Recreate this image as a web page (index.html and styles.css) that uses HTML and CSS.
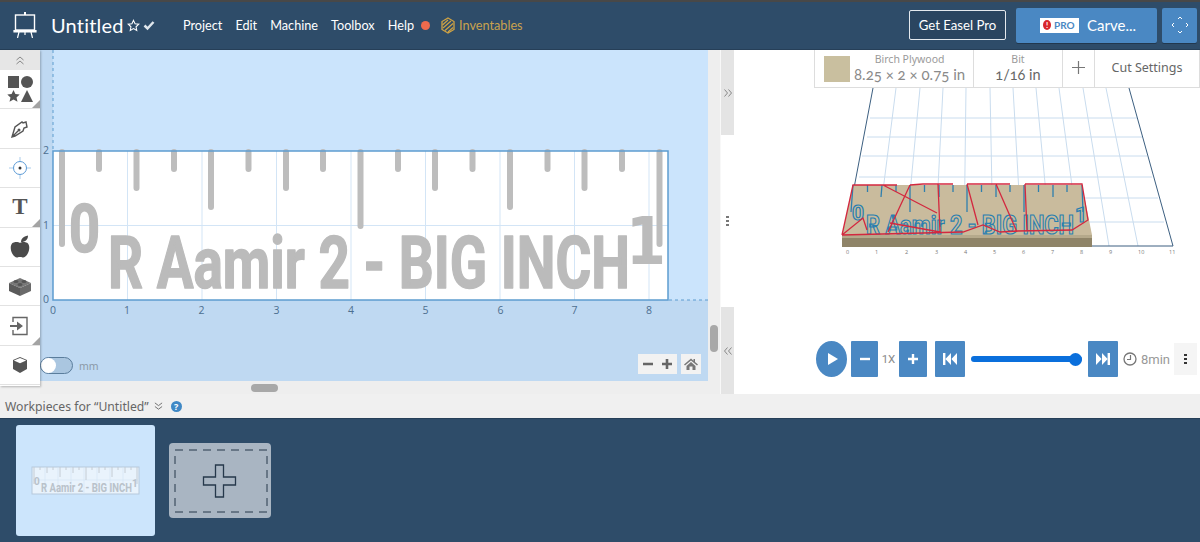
FILE: index.html
```html
<!DOCTYPE html>
<html lang="en">
<head>
    <meta charset="UTF-8">
    <title>Easel</title>
    <link rel="stylesheet" href="styles.css">
</head>
<body>
    <!-- Top bar -->
    <header class="topbar">
        <svg class="logo" width="24" height="26" viewBox="0 0 24 26">
            <path d="M11 0h2v3h-2z" fill="#fff"/>
            <rect x="2.500" y="3" width="19" height="15" fill="none" stroke="#fff" stroke-width="1.400"/>
            <path d="M1 18.500h22v1.500H1zM6 20l-1.500 6M18 20l1.500 6M12 20v3" stroke="#fff" stroke-width="1.200" fill="#fff"/>
        </svg>
        <div class="doc-title">Untitled</div>
        <svg class="doc-star" width="13" height="13" viewBox="0 0 24 24"><path d="M12 2.500l2.900 6.300 6.800.8-5 4.700 1.300 6.800-6-3.400-6 3.400 1.300-6.800-5-4.700 6.800-.8z" fill="none" stroke="#fff" stroke-width="2"/></svg>
        <svg class="doc-check" width="12" height="12" viewBox="0 0 24 24"><path d="M3 13l6 6L21 6" fill="none" stroke="#dfe6ec" stroke-width="5"/></svg>
        <nav class="menu">
            <a href="#">Project</a>
            <a href="#">Edit</a>
            <a href="#">Machine</a>
            <a href="#">Toolbox</a>
            <a href="#">Help</a>
        </nav>
        <span class="status-dot"></span>
        <svg class="inv-logo" width="14" height="17" viewBox="0 0 14 17">
            <path d="M7 1l6 3.500v8L7 16l-6-3.500v-8z" fill="none" stroke="#d0a344" stroke-width="1.300"/>
            <path d="M1.500 8L7 3M2 11l8-7M4 13.500l8-7M7 15l5-4.500" stroke="#d0a344" stroke-width="1.200"/>
        </svg>
        <a class="inv-link" href="#">Inventables</a>
        <button class="btn-outline">Get Easel Pro</button>
        <button class="btn-carve">
            <span class="pro-badge"><span class="pro-dot">!</span>PRO</span>
            Carve...
        </button>
        <button class="btn-expand">
            <svg width="20" height="20" viewBox="0 0 20 20"><path d="M8 4l2-2 2 2M8 16l2 2 2-2M4 8l-2 2 2 2M16 8l2 2-2 2" fill="none" stroke="#fff" stroke-width="1"/></svg>
        </button>
    </header>

    <main class="workspace">
        <!-- Tools -->
        <aside class="tools">
            <div class="tool-collapse">
                <svg width="10" height="10" viewBox="0 0 10 10"><path d="M1.500 5l3.500-3 3.500 3M1.500 9l3.500-3 3.500 3" fill="none" stroke="#888" stroke-width="1"/></svg>
            </div>
            <div class="tool tool-more">
                <svg width="26" height="30" viewBox="0 0 26 30" fill="#555">
                    <rect x="1" y="2" width="11" height="12"/><circle cx="20" cy="8" r="6"/>
                    <path d="M6.500 16l1.900 4.100 4.300.5-3.200 2.900 1 4.300-4-2.300-4 2.300 1-4.300-3.200-2.900 4.300-.5z"/>
                    <path d="M20 16l6 12H14z"/>
                </svg>
            </div>
            <div class="tool">
                <svg width="20" height="20" viewBox="0 0 20 20"><path d="M2 18l3-10 7-5 1 1 3-1 1 5-3 1-1 3-8 5zM2 18l6-6" fill="none" stroke="#555" stroke-width="1.400"/><circle cx="9" cy="11" r="1.500" fill="#555"/></svg>
            </div>
            <div class="tool">
                <svg width="24" height="24" viewBox="0 0 24 24"><circle cx="12" cy="12" r="6.500" fill="none" stroke="#5a9ad6" stroke-width="1"/><circle cx="12" cy="12" r="1.500" fill="#333"/><path d="M12 1v4M12 19v4M1 12h4M19 12h4" stroke="#a9cbea" stroke-width="1"/></svg>
            </div>
            <div class="tool tool-more"><span class="tool-t">T</span></div>
            <div class="tool">
                <svg width="22" height="24" viewBox="0 0 22 24" fill="#4a4a4a">
                    <path d="M11 8c-2-1.500-6-1.500-8 .5-2 2.500-1.500 7 .5 10.500 1.500 2.500 3.500 4 5 3.500 1.500-.6 3.500-.6 5 0 1.500.5 3.500-1 5-3.500 2-3.500 2.500-8 .5-10.500-2-2-6-2-8-.5z"/>
                    <path d="M12 7c0-3 2-5.500 7-6.500 0 4-2.500 6.500-7 6.500z"/>
                </svg>
            </div>
            <div class="tool">
                <svg width="24" height="22" viewBox="0 0 24 22">
                    <path d="M1 8l11-5 11 5-11 5z" fill="#777"/>
                    <path d="M1 8v8l11 5v-8z" fill="#5a5a5a"/>
                    <path d="M23 8v8l-11 5v-8z" fill="#6a6a6a"/>
                    <ellipse cx="8" cy="6.500" rx="2.500" ry="1.500" fill="#555"/><ellipse cx="16" cy="6.500" rx="2.500" ry="1.500" fill="#555"/><ellipse cx="12" cy="9.500" rx="2.500" ry="1.500" fill="#555"/>
                </svg>
            </div>
            <div class="tool tool-more">
                <svg width="20" height="20" viewBox="0 0 20 20"><path d="M3 6V1.500h14v17H3V14" fill="none" stroke="#666" stroke-width="1.400"/><path d="M0 9h7V5.500l6 4.500-6 4.500V11H0z" fill="#666"/></svg>
            </div>
            <div class="tool">
                <svg width="18" height="18" viewBox="0 0 18 18"><path d="M9 1l7 3v9l-7 4-7-4V4z" fill="#555"/><path d="M2.800 4.500L9 2l6.200 2.500L9 7.200z" fill="#fff"/></svg>
            </div>
        </aside>

        <!-- Design canvas -->
        <section class="canvas-col">
            <div class="canvas-row">
                <div class="canvas">
                    <svg class="canvas-svg" width="668" height="331" viewBox="40 50 668 331">
                        <rect x="40" y="50" width="668" height="331" fill="#cbe4fc"/>
                        <rect x="40" y="50" width="13" height="331" fill="#bfd9f2"/>
                        <rect x="40" y="300" width="668" height="81" fill="#bfd9f2"/>
                        <rect x="53" y="151" width="615" height="149" fill="#fff"/>
                        <path class="grid" d="M127.500 151v149M202 151v149M276.500 151v149M351 151v149M425.500 151v149M500 151v149M574.500 151v149M649 151v149M53 225.500h615"/>
                        <path class="dash" d="M53 50v100M669 300h39"/>
                        <path class="ticks" d="M62 152v92M99 152v17M136.500 152v36M174 152v17M211 152v55M248.500 152v17M286 152v36M323 152v17M360.500 152v74M398 152v17M435 152v36M472.500 152v17M510 152v55M547.500 152v17M584.500 152v36M622 152v17M659.500 152v92"/>
                        <text class="big-text" x="108" y="288" font-size="73" textLength="522" lengthAdjust="spacingAndGlyphs">R Aamir 2 - BIG INCH</text>
                        <text class="big-text" x="69" y="252" font-size="67" textLength="31" lengthAdjust="spacingAndGlyphs">0</text>
                        <text class="big-text big-one" x="626" y="264" font-size="66" textLength="40" lengthAdjust="spacingAndGlyphs">1</text>
                        <rect x="53" y="151" width="615" height="149" fill="none" stroke="#5d9ccf" stroke-width="1.500"/>
                        <g class="axis">
                            <text x="53" y="314">0</text><text x="127" y="314">1</text><text x="201.500" y="314">2</text><text x="276.500" y="314">3</text><text x="351" y="314">4</text><text x="425.500" y="314">5</text><text x="500.500" y="314">6</text><text x="574.500" y="314">7</text><text x="649" y="314">8</text>
                            <text x="46" y="154">2</text><text x="46" y="229">1</text><text x="46" y="303">0</text>
                        </g>
                    </svg>
                    <div class="unit-toggle">
                        <span class="toggle-track"><span class="toggle-knob"></span></span>
                        <span class="toggle-label">mm</span>
                    </div>
                    <div class="zoom-ctrl">
                        <div class="zoom-box">
                            <svg width="39" height="20" viewBox="0 0 39 20"><path d="M5 10h10M24 10h10M29 5v10" stroke="#666" stroke-width="2.600"/></svg>
                        </div>
                        <div class="home-box">
                            <svg width="14" height="14" viewBox="0 0 14 14"><path d="M7 1.500L0 7.500l1 1L7 3.500l6 5 1-1-3-2.500V2H9.500v1.800z M2.500 9L7 5l4.500 4v4H8.500V9.500h-3V13h-3z" fill="#777"/></svg>
                        </div>
                    </div>
                </div>
                <div class="vscroll"><span class="vthumb"></span></div>
            </div>
            <div class="hscroll"><span class="hthumb"></span></div>
        </section>

        <!-- Splitter -->
        <div class="splitter">
            <div class="split-end">
                <svg width="10" height="10" viewBox="0 0 10 10"><path d="M1.500 1.500l3 3.500-3 3.500M5.500 1.500l3 3.500-3 3.500" fill="none" stroke="#888" stroke-width="1"/></svg>
            </div>
            <div class="split-mid"><span class="vdots"><i></i><i></i><i></i></span></div>
            <div class="split-end">
                <svg width="10" height="10" viewBox="0 0 10 10"><path d="M4.500 1.500L1.500 5l3 3.500M8.500 1.500L5.500 5l3 3.500" fill="none" stroke="#888" stroke-width="1"/></svg>
            </div>
        </div>

        <!-- Simulation -->
        <section class="preview-col">
            <div class="stock-bar">
                <div class="stock-cell stock-material">
                    <span class="swatch"></span>
                    <div class="stock-text">
                        <div class="stock-label">Birch Plywood</div>
                        <div class="stock-value">8.25 × 2 × 0.75 in</div>
                    </div>
                </div>
                <div class="stock-cell stock-bit">
                    <div class="stock-text">
                        <div class="stock-label">Bit</div>
                        <div class="stock-value bit-value">1/16 in</div>
                    </div>
                </div>
                <div class="stock-cell stock-add">
                    <svg width="13" height="13" viewBox="0 0 13 13"><path d="M6.500 0v13M0 6.500h13" stroke="#777" stroke-width="1.200"/></svg>
                </div>
                <div class="stock-cell stock-settings">Cut Settings</div>
            </div>

            <svg class="preview" width="466" height="253" viewBox="734 88 466 253">
                <path class="p-grid" d="M896 88L876 246M920 88L905 246M943 88L935 246M966 88L964 246M990 88L993 246M1013 88L1022 246M1036 88L1051 246M1059 88L1080 246M1083 88L1109 246M1106 88L1138 246M870 118H1137M867 137H1142M862 156H1147M859 177H1152M856 198H1158M852 222H1164"/>
                <path d="M873 88L843 246H1173L1129 88" fill="none" stroke="#3c5f80" stroke-width="1"/>
                <polygon points="853,185 1082,185 1092,235 842,235" fill="#c9bb9d"/>
                <polygon points="842,235 1092,235 1092,247 842,247" fill="#8f8468"/>
                <polygon points="842,235 1092,235 1092,238 842,238" fill="#b5a98b"/>
                <path class="p-ticks" d="M853 185L851 212M867.500 185v7M882 185l-1 12M896 185v7M910 185v27M924.500 185v7M939 185v12M953 185v7M967 185v27M981.500 185v7M996 185v12M1010 185v7M1024 185v27M1038.500 185v7M1053 185v12M1067 185v7M1082 185l1 27"/>
                <text class="p-text" x="866" y="234" font-size="25" textLength="208" lengthAdjust="spacingAndGlyphs">R Aamir 2 - BIG INCH</text>
                <text class="p-text" x="852" y="220" font-size="20" textLength="12" lengthAdjust="spacingAndGlyphs">0</text>
                <text class="p-text" x="1075" y="222" font-size="20" textLength="12" lengthAdjust="spacingAndGlyphs">1</text>
                <path class="p-red" d="M842 235L853 185H897M883 185L937 213M910 185L888 232M910 185L923 184H953M938 184L940 232M967 184H1010M967 184L978 225M996 184L1017 232M1025 184H1082L1088 220L1072 230L1017 231M1025 184L1027 231M842 235L863 218L867 230M842 235L963 232L983 225L1000 232L1017 231M890 223L940 232"/>
                <g class="p-axis">
                    <text x="846" y="254">0</text><text x="875" y="254">1</text><text x="905" y="254">2</text><text x="935" y="254">3</text><text x="964" y="254">4</text><text x="993" y="254">5</text><text x="1022" y="254">6</text><text x="1051" y="254">7</text><text x="1080" y="254">8</text><text x="1109" y="254">9</text><text x="1138" y="254">10</text><text x="1169" y="254">11</text>
                </g>
            </svg>

            <div class="controls">
                <button class="btn-play"><svg width="12" height="14" viewBox="0 0 12 14"><path d="M1 1l10 6-10 6z" fill="#fff"/></svg></button>
                <button class="btn-sim btn-minus"><svg width="12" height="12" viewBox="0 0 12 12"><path d="M1 6h10" stroke="#fff" stroke-width="2.400"/></svg></button>
                <span class="speed">1X</span>
                <button class="btn-sim btn-plus"><svg width="12" height="12" viewBox="0 0 12 12"><path d="M1 6h10M6 1v10" stroke="#fff" stroke-width="2.400"/></svg></button>
                <button class="btn-sim btn-wide"><svg width="14" height="12" viewBox="0 0 14 12"><path d="M0 0h2.400v12H0zM8 0v12L2.400 6zM14 0v12L8.400 6z" fill="#fff"/></svg></button>
                <div class="slider"><span class="slider-thumb"></span></div>
                <button class="btn-sim btn-wide"><svg width="14" height="12" viewBox="0 0 14 12"><path d="M14 0h-2.400v12H14zM6 0v12l5.600-6zM0 0v12l5.600-6z" fill="#fff"/></svg></button>
                <svg class="clock" width="14" height="14" viewBox="0 0 14 14"><circle cx="7" cy="7" r="6" fill="none" stroke="#777" stroke-width="1.300"/><path d="M7.500 3v4.500H4" fill="none" stroke="#777" stroke-width="1.200"/></svg>
                <span class="duration">8min</span>
                <button class="btn-menu"><span class="vdots dark"><i></i><i></i><i></i></span></button>
            </div>
        </section>
    </main>

    <!-- Workpieces -->
    <div class="wp-header">
        <span>Workpieces for “Untitled”</span>
        <svg width="9" height="9" viewBox="0 0 10 10"><path d="M1 1l4 3 4-3M1 5l4 3 4-3" fill="none" stroke="#666" stroke-width="1"/></svg>
        <span class="help-icon">?</span>
    </div>
    <footer class="wp-bar">
        <div class="wp-card">
            <svg width="110" height="32" viewBox="0 0 110 32">
                <rect x="1" y="2" width="107" height="27" fill="#e9f3fc" stroke="#b6c9dc"/>
                <path d="M14 2v27M27 2v27M40 2v27M53 2v27M66 2v27M79 2v27M92 2v27M1 15h107" stroke="#d3e4f4" stroke-width=".6"/>
                <path d="M3 2v17M9 2v3M16 2v6M22 2v3M29 2v10M35 2v3M42 2v6M48 2v3M55 2v13M61 2v3M68 2v6M74 2v3M81 2v10M87 2v3M94 2v6M100 2v3M106 2v17" stroke="#c4ccd4" stroke-width="1"/>
                <text x="10" y="27" font-size="13" textLength="91" lengthAdjust="spacingAndGlyphs" class="thumb-text">R Aamir 2 - BIG INCH</text>
                <text x="3" y="20" font-size="10" class="thumb-text">0</text>
                <text x="101" y="22" font-size="10" class="thumb-text">1</text>
            </svg>
        </div>
        <div class="wp-add">
            <svg width="102" height="75" viewBox="0 0 102 75">
                <rect x="6" y="7" width="92" height="62" fill="none" stroke="#26384b" stroke-width="1" stroke-dasharray="8 6"/>
                <path d="M46.500 22h8v12h12v8h-12v12h-8V42h-12v-8h12z" fill="none" stroke="#26384b" stroke-width="1.300"/>
            </svg>
        </div>
    </footer>
</body>
</html>
```

FILE: styles.css
```css
/* Global Styles */
* {
    box-sizing: border-box;
}

html,
body {
    margin: 0;
    height: 542px;
    overflow: hidden;
}

body {
    font-family: "Noto Sans", Arial, sans-serif;
    background-color: #f0f0f0;
    color: #666;
}

button {
    font-family: inherit;
    border: none;
    padding: 0;
    cursor: pointer;
}

/* Top bar */
.topbar {
    display: flex;
    align-items: center;
    height: 50px;
    padding-bottom: 2px;
    background-color: #2e4c69;
    border-top: 2px solid #484848;
    color: white;
    box-shadow: inset 0 -1px 0 #263f58;
    font-family: "Lato", sans-serif;
}

.logo {
    margin-left: 13px;
}

.doc-title {
    margin-left: 14px;
    width: 76px;
    font-size: 20px;
    letter-spacing: 0.200px;
}

.doc-check {
    margin-left: 3px;
}

.menu {
    display: flex;
    gap: 13px;
    margin-left: 28px;
}

.menu a {
    color: white;
    text-decoration: none;
    font-size: 12.700px;
}

.status-dot {
    width: 9px;
    height: 9px;
    margin-left: 7px;
    border-radius: 50%;
    background-color: #ee6a4d;
}

.inv-logo {
    margin-left: 11px;
}

.inv-link {
    margin-left: 4px;
    color: #c9a24e;
    font-size: 12.700px;
    text-decoration: none;
}

.btn-outline {
    margin-left: auto;
    width: 97px;
    height: 30px;
    background-color: #2a4560;
    border: 1px solid #e4e9ee;
    border-radius: 2px;
    color: white;
    font-size: 13.200px;
}

.btn-carve {
    display: flex;
    align-items: center;
    gap: 8px;
    margin-left: 10px;
    width: 141px;
    height: 35px;
    padding-left: 24px;
    background-color: #4a88c3;
    border-radius: 2px;
    color: white;
    font-size: 15px;
    box-shadow: 0 1px 0 #22384e;
}

.pro-badge {
    display: flex;
    align-items: center;
    gap: 3px;
    width: 39px;
    height: 15px;
    padding-left: 3px;
    background-color: white;
    color: #4a88c3;
    font-size: 10px;
    font-weight: bold;
}

.pro-dot {
    width: 8px;
    height: 10px;
    border-radius: 50%;
    background-color: #d8262c;
    color: white;
    font-size: 8px;
    line-height: 10px;
    text-align: center;
}

.btn-expand {
    display: flex;
    align-items: center;
    justify-content: center;
    width: 35px;
    height: 35px;
    margin: 0 3px 0 5px;
    background-color: #4a88c3;
    border-radius: 2px;
    box-shadow: 0 1px 0 #22384e;
}

/* Workspace */
.workspace {
    display: flex;
    height: 344px;
}

.tools {
    position: relative;
    z-index: 2;
    flex: none;
    width: 40px;
    height: 336px;
    background-color: white;
    box-shadow: 1px 1px 2px rgba(0, 0, 0, 0.25);
}

.tool-collapse {
    display: flex;
    align-items: center;
    justify-content: center;
    height: 20px;
    background-color: #e6e6e6;
}

.tool {
    position: relative;
    display: flex;
    align-items: center;
    justify-content: center;
    height: 39.400px;
    border-bottom: 1px solid #e2e2e2;
}

.tool-more::after {
    content: "";
    position: absolute;
    right: 0;
    bottom: 0;
    border-style: solid;
    border-width: 0 0 8px 8px;
    border-color: transparent transparent #a3a3a3 transparent;
}

.tool-t {
    font-family: "Liberation Serif", serif;
    font-size: 23px;
    font-weight: bold;
    color: #555;
}

.canvas-col {
    flex: none;
    width: 680px;
    height: 344px;
}

.canvas-row {
    display: flex;
    height: 331px;
}

.canvas {
    position: relative;
    width: 668px;
    height: 331px;
}

.canvas-svg {
    display: block;
}

.grid {
    fill: none;
    stroke: #d3e5f6;
    stroke-width: 1;
}

.dash {
    fill: none;
    stroke: #5d9ccf;
    stroke-width: 1;
    stroke-dasharray: 3 3;
}

.ticks {
    fill: none;
    stroke: #bdbdbd;
    stroke-width: 6;
    stroke-linecap: round;
}

.big-text {
    font-family: "Roboto", sans-serif;
    font-weight: bold;
    fill: #bbbbbb;
    stroke: #bbbbbb;
    stroke-width: 1.500;
    stroke-linejoin: round;
}

.big-one {
    font-family: "DejaVu Sans", sans-serif;
    stroke-width: 0;
}

.axis text {
    font-family: "Open Sans", sans-serif;
    font-size: 10.500px;
    fill: #4d6f90;
    text-anchor: middle;
}

.unit-toggle {
    position: absolute;
    left: 0;
    bottom: 7px;
    display: flex;
    align-items: center;
    gap: 6px;
}

.toggle-track {
    display: block;
    width: 33px;
    height: 17px;
    background-color: #aac6e0;
    border: 1px solid #5a7d9c;
    border-radius: 9px;
}

.toggle-knob {
    display: block;
    width: 15px;
    height: 15px;
    background-color: white;
    border-radius: 50%;
}

.toggle-label {
    font-size: 10.500px;
    color: #8b9aa8;
}

.zoom-ctrl {
    position: absolute;
    right: 7px;
    bottom: 7px;
    display: flex;
    gap: 4px;
}

.zoom-box,
.home-box {
    display: flex;
    align-items: center;
    justify-content: center;
    height: 20px;
    background-color: #f2f2f2;
}

.zoom-box {
    width: 39px;
}

.home-box {
    width: 20px;
}

.vscroll {
    position: relative;
    width: 12px;
    background-color: #eeeeee;
}

.vthumb {
    position: absolute;
    left: 2px;
    top: 275px;
    width: 8px;
    height: 27px;
    background-color: #a8a8a8;
    border-radius: 4px;
}

.hscroll {
    position: relative;
    height: 13px;
    background-color: #eeeeee;
}

.hthumb {
    position: absolute;
    left: 211px;
    top: 3px;
    width: 27px;
    height: 8px;
    background-color: #a8a8a8;
    border-radius: 4px;
}

.splitter {
    display: flex;
    flex-direction: column;
    flex: none;
    width: 14px;
    border-left: 1px solid #f8f8f8;
}

.split-end {
    display: flex;
    align-items: center;
    justify-content: center;
    background-color: #e4e4e4;
}

.split-end:first-child {
    height: 85px;
}

.split-end:last-child {
    height: 87px;
}

.split-mid {
    display: flex;
    align-items: center;
    justify-content: center;
    flex: 1;
    background-color: white;
}

.vdots {
    display: flex;
    flex-direction: column;
    gap: 1.500px;
}

.vdots i {
    display: block;
    width: 3px;
    height: 2.500px;
    background-color: #777;
}

.vdots.dark i {
    background-color: #333;
}

/* Simulation panel */
.preview-col {
    flex: none;
    width: 466px;
    height: 344px;
    background-color: white;
}

.stock-bar {
    display: flex;
    width: 386px;
    height: 38px;
    margin-left: 80px;
    background-color: white;
    border: 1px solid #dddddd;
    border-top: none;
}

.stock-cell {
    display: flex;
    align-items: center;
    justify-content: center;
    border-right: 1px solid #dddddd;
}

.stock-material {
    width: 159px;
    gap: 4px;
    padding-left: 9px;
    justify-content: flex-start;
}

.swatch {
    flex: none;
    width: 26px;
    height: 26px;
    background-color: #c9bf9f;
}

.stock-text {
    padding-bottom: 3px;
    text-align: center;
}

.stock-label {
    font-size: 10.500px;
    line-height: 14px;
    color: #9a9a9a;
}

.stock-value {
    font-family: "Lato", sans-serif;
    font-size: 15px;
    font-variant-numeric: oldstyle-nums;
    line-height: 17px;
    color: #8a8a8a;
    white-space: nowrap;
}

.bit-value {
    font-size: 14.500px;
    color: #666;
}

.stock-bit {
    width: 89px;
}

.stock-add {
    width: 32px;
    padding-bottom: 3px;
}

.stock-settings {
    flex: 1;
    padding-bottom: 3px;
    border-right: none;
    font-size: 12.500px;
    color: #666;
}

.preview {
    display: block;
}

.p-grid {
    fill: none;
    stroke: #c9dcee;
    stroke-width: 1;
}

.p-ticks {
    fill: none;
    stroke: #2f7fae;
    stroke-width: 1.300;
}

.p-text {
    font-family: "Roboto", sans-serif;
    font-weight: bold;
    fill: none;
    stroke: #2a7fb0;
    stroke-width: 1.200;
}

.p-red {
    fill: none;
    stroke: #d3283f;
    stroke-width: 1.300;
}

.p-axis text {
    font-family: "Open Sans", sans-serif;
    font-size: 5.500px;
    fill: #777;
}

.controls {
    display: flex;
    align-items: center;
    height: 36px;
    padding-left: 82px;
}

.btn-play {
    display: flex;
    align-items: center;
    justify-content: center;
    width: 31px;
    height: 36px;
    padding-left: 2px;
    background-color: #4a88c3;
    border-radius: 50%;
}

.btn-sim {
    display: flex;
    align-items: center;
    justify-content: center;
    height: 36px;
    background-color: #4a88c3;
    border-radius: 1px;
}

.btn-minus {
    width: 27px;
    margin-left: 4px;
}

.speed {
    width: 21px;
    text-align: center;
    font-family: "Roboto", sans-serif;
    font-size: 11.500px;
    color: #8a8a8a;
}

.btn-plus {
    width: 28px;
}

.btn-wide {
    width: 30px;
}

.btn-plus + .btn-wide {
    margin-left: 8px;
}

.slider {
    position: relative;
    width: 111px;
    height: 6px;
    margin: 0 6px;
    background-color: #0a6fdc;
    border-radius: 3px;
}

.slider-thumb {
    position: absolute;
    right: 0;
    top: -3.500px;
    width: 13px;
    height: 13px;
    background-color: #0a6fdc;
    border-radius: 50%;
}

.clock {
    margin-left: 5px;
}

.duration {
    width: 30px;
    margin-left: 4px;
    font-family: "Roboto", sans-serif;
    font-size: 13px;
    color: #999;
}

.btn-menu {
    display: flex;
    align-items: center;
    justify-content: center;
    width: 23px;
    height: 32px;
    margin-left: 3px;
    background-color: #f5f5f5;
}

/* Workpieces */
.wp-header {
    display: flex;
    align-items: center;
    gap: 5px;
    height: 24px;
    padding-left: 5px;
    background-color: #f0f0f0;
    font-size: 12.200px;
    color: #666;
}

.help-icon {
    width: 11px;
    height: 11px;
    margin-left: 3px;
    border-radius: 50%;
    background-color: #3f88c5;
    color: white;
    font-size: 9px;
    font-weight: bold;
    line-height: 11px;
    text-align: center;
}

.wp-bar {
    display: flex;
    align-items: center;
    gap: 14px;
    height: 124px;
    padding-left: 16px;
    background-color: #2e4c69;
    border-top: 1px solid #263f58;
}

.wp-card {
    display: flex;
    align-items: center;
    justify-content: center;
    width: 139px;
    height: 111px;
    background-color: #cce5fc;
    border-radius: 3px;
}

.wp-add {
    width: 102px;
    height: 75px;
    background-color: #a9b5c2;
    border-radius: 4px;
}

.wp-add svg {
    display: block;
}

.thumb-text {
    font-family: "Roboto", sans-serif;
    font-weight: bold;
    fill: #b9c2ca;
}
```
